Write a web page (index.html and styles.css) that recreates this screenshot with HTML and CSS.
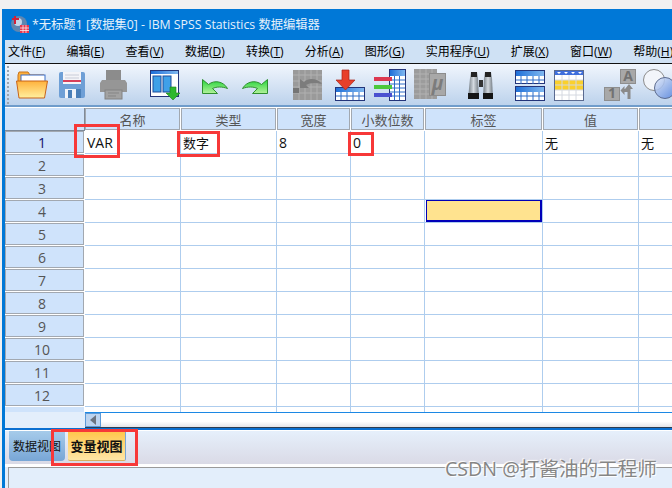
FILE: index.html
```html
<!DOCTYPE html>
<html lang="zh-CN">
<head>
  <meta charset="UTF-8" />
  <title>*无标题1 [数据集0] - IBM SPSS Statistics 数据编辑器</title>
  <link rel="stylesheet" href="styles.css">
</head>
<body>
  <svg class="defs" width="0" height="0">
    <defs>
      <linearGradient id="hdr" x1="0" y1="0" x2="1" y2="0"><stop offset="0" stop-color="#1f6fd8"/><stop offset="1" stop-color="#7fb8f0"/></linearGradient>
      <linearGradient id="grn" x1="0" y1="0" x2="0" y2="1"><stop offset="0" stop-color="#22d43a"/><stop offset="1" stop-color="#b4f29a"/></linearGradient>
      <linearGradient id="fold" x1="0" y1="0" x2="0" y2="1"><stop offset="0" stop-color="#ffb23c"/><stop offset="1" stop-color="#fff0a0"/></linearGradient>
      <linearGradient id="silver" x1="0" y1="0" x2="1" y2="0"><stop offset="0" stop-color="#6f7880"/><stop offset=".5" stop-color="#d4dae0"/><stop offset="1" stop-color="#6f7880"/></linearGradient>
      <linearGradient id="ball" x1="0" y1="0" x2="1" y2="1"><stop offset="0" stop-color="#dfe8f8"/><stop offset="1" stop-color="#4f7fdc"/></linearGradient>
    </defs>
  </svg>

  <div class="window">
    <div class="titlebar">
      <svg class="app-icon" width="18" height="18" viewBox="0 0 18 18">
        <circle cx="8" cy="9" r="8" fill="#5f86b0"/>
        <circle cx="7" cy="7" r="4" fill="#c4d6e8"/>
        <path d="M4 1v8M1 4h7" stroke="#d0203a" stroke-width="2"/>
        <rect x="9" y="10" width="9" height="8" fill="#e8384f"/>
        <path d="M9 13h9M9 15.500h9M12 10v8M15 10v8" stroke="#fff" stroke-width=".7"/>
      </svg>
      <span>*无标题1 [数据集0] - IBM SPSS Statistics 数据编辑器</span>
    </div>

    <div class="menubar">
      <span>文件(<u>F</u>)</span>
      <span>编辑(<u>E</u>)</span>
      <span>查看(<u>V</u>)</span>
      <span>数据(<u>D</u>)</span>
      <span>转换(<u>T</u>)</span>
      <span>分析(<u>A</u>)</span>
      <span>图形(<u>G</u>)</span>
      <span>实用程序(<u>U</u>)</span>
      <span>扩展(<u>X</u>)</span>
      <span>窗口(<u>W</u>)</span>
      <span>帮助(<u>H</u>)</span>
    </div>

    <div class="toolbar">
      <div class="handle"></div>

      <!-- open -->
      <svg class="tool" viewBox="0 0 32 32">
        <path d="M2 6l1-3h9l2 3h14v8H2z" fill="#ffb03a" stroke="#c8741a"/>
        <rect x="5" y="6" width="24" height="8" fill="#fff" stroke="#3a6fc8"/>
        <path d="M.500 12h31l-3 17H3z" fill="url(#fold)" stroke="#c8641a"/>
      </svg>
      <!-- save -->
      <svg class="tool" viewBox="0 0 32 32">
        <rect x="3" y="3" width="26" height="26" rx="2" fill="#6e9fd6"/>
        <rect x="7" y="3" width="18" height="12" fill="#f4f4f8"/>
        <path d="M7 12h18" stroke="#d8405a" stroke-width="2"/>
        <path d="M9 6h14M9 9h14" stroke="#c8ccd8"/>
        <rect x="9" y="20" width="15" height="9" fill="#f0f4fa"/>
        <rect x="12" y="21" width="4" height="8" fill="#4a7fb8"/>
        <path d="M20 20h5v9h-5z" fill="#4a7fb8"/>
      </svg>
      <!-- print -->
      <svg class="tool" viewBox="0 0 32 32">
        <path d="M10 1h15v10H10z" fill="#8c8c8c"/>
        <path d="M6 11h23l2 3v9H4v-9z" fill="#969696"/>
        <rect x="9" y="21" width="17" height="9" fill="#a2a2a2" stroke="#828282"/>
        <path d="M12 24h11M12 27h8" stroke="#858585"/>
      </svg>
      <!-- variable view -->
      <svg class="tool g12" viewBox="0 0 32 32">
        <rect x="2.500" y="1.500" width="28" height="26" fill="#fff" stroke="#24357a"/>
        <rect x="3" y="2" width="27" height="3" fill="url(#hdr)"/>
        <rect x="5" y="7" width="8" height="16" fill="#3fa0e8" stroke="#1c4c9c"/>
        <rect x="15" y="7" width="8" height="16" fill="#3fa0e8" stroke="#1c4c9c"/>
        <path d="M22 18h6v6h4l-7 7-7-7h4z" fill="#2eb82e" stroke="#1c7c1c" stroke-width=".6"/>
      </svg>
      <!-- undo -->
      <svg class="tool g12" viewBox="0 0 32 32">
        <path d="M2.500 10.500v14h15l-5-5c4-2 10-2 15 0-4-7-13-9-19-4z" fill="url(#grn)" stroke="#2f8f2f"/>
      </svg>
      <!-- redo -->
      <svg class="tool" viewBox="0 0 32 32">
        <path transform="matrix(-1 0 0 1 30 0)" d="M2.500 10.500v14h15l-5-5c4-2 10-2 15 0-4-7-13-9-19-4z" fill="url(#grn)" stroke="#2f8f2f"/>
      </svg>
      <!-- go to case -->
      <svg class="tool g12" viewBox="0 0 32 32">
        <rect x="1" y="1" width="29" height="30" fill="#9a9a9a"/>
        <path d="M1 6h29M1 12h29M1 18h29M1 24h29M7 1v30M13 1v30M19 1v30M25 1v30" stroke="#b0b0b0"/>
        <rect x="1" y="19" width="6" height="5" fill="#757575"/>
        <path d="M8 10v9h9l-3-3c3-2 9-3 16-1-4-5-13-7-18-2z" fill="#7c7c7c"/>
      </svg>
      <!-- go to variable -->
      <svg class="tool g2" viewBox="0 0 32 32">
        <rect x="1.500" y="18.500" width="29" height="13" fill="#fff" stroke="#24357a"/>
        <rect x="2" y="19" width="28" height="4" fill="url(#hdr)"/>
        <path d="M2 27h28M7 23v8M13 23v8M19 23v8M25 23v8" stroke="#2c6cc8"/>
        <path d="M8 1h7v10h6L11.500 21 2 11h6z" fill="#e8402a" stroke="#a82418" stroke-width=".7"/>
      </svg>
      <!-- variables -->
      <svg class="tool" viewBox="0 0 32 32">
        <rect x="15.500" y=".500" width="16" height="31" fill="#fff" stroke="#24357a"/>
        <rect x="16" y="1" width="15" height="6" fill="url(#hdr)"/>
        <path d="M16 11h15M16 15h15M16 19h15M16 23h15M16 27h15M20.500 7v24M25.500 7v24" stroke="#2c6cc8"/>
        <rect x="0" y="8" width="18" height="4" fill="#dc3850"/>
        <rect x="0" y="16" width="18" height="4" fill="#4cc83c"/>
        <rect x="0" y="24" width="18" height="4" fill="#4a50d0"/>
      </svg>
      <!-- value labels -->
      <svg class="tool" viewBox="0 0 32 32">
        <rect x="0" y="0" width="23" height="30" fill="#9c9c9c"/>
        <path d="M0 5h23M0 10h23M0 15h23M0 20h23M0 25h23M6 0v30M12 0v30M18 0v30" stroke="#b2b2b2"/>
        <rect x="15.500" y="4.500" width="16" height="22" fill="#a8a8a8" stroke="#8c8c8c"/>
        <text class="mu" x="23.500" y="21" text-anchor="middle">μ</text>
      </svg>
      <!-- find -->
      <svg class="tool g12" viewBox="0 0 32 32">
        <path d="M4 9l1-6h6l1 6 1 21H2z" fill="url(#silver)"/>
        <path d="M18 9l1-6h6l1 6 1 21H17z" fill="url(#silver)"/>
        <rect x="5" y="3" width="6" height="5" fill="#222"/>
        <rect x="19" y="3" width="6" height="5" fill="#222"/>
        <rect x="2" y="24" width="11" height="6" fill="#151515"/>
        <rect x="17" y="24" width="10" height="6" fill="#151515"/>
        <rect x="13" y="11" width="4" height="7" fill="#333"/>
      </svg>
      <!-- split file -->
      <svg class="tool g8" viewBox="0 0 32 32">
        <rect x="1.500" y="1.500" width="29" height="13" fill="#fff" stroke="#24357a"/>
        <rect x="2" y="2" width="28" height="5" fill="url(#hdr)"/>
        <path d="M2 11h28M7 7v8M13 7v8M19 7v8M25 7v8" stroke="#2c6cc8"/>
        <rect x="1.500" y="17.500" width="29" height="14" fill="#fff" stroke="#24357a"/>
        <rect x="2" y="18" width="28" height="5" fill="url(#hdr)"/>
        <path d="M2 27h28M7 23v8M13 23v8M19 23v8M25 23v8" stroke="#2c6cc8"/>
      </svg>
      <!-- select cases -->
      <svg class="tool" viewBox="0 0 32 32">
        <rect x=".500" y="1.500" width="29" height="30" fill="#fff" stroke="#5a6a90"/>
        <rect x="1" y="2" width="28" height="4" fill="#3f6fdc"/>
        <rect x="1" y="11" width="28" height="10" fill="#fad02c"/>
        <path d="M1 11h28M1 16h28M1 21h28M1 26h28M8 6v25M15 6v25M22 6v25" stroke="#d4d8e0"/>
        <path d="M3 3h4l-2 2zM10 3h4l-2 2zM17 3h4l-2 2zM24 3h4l-2 2z" fill="#fff"/>
      </svg>
      <!-- value labels 1/A -->
      <svg class="tool g10" viewBox="0 0 32 32">
        <rect x="16.500" y=".500" width="15" height="14" fill="#a8a8a8" stroke="#8e8e8e"/>
        <rect x=".500" y="18.500" width="15" height="13" fill="#a8a8a8" stroke="#8e8e8e"/>
        <text class="swap" x="24" y="12" text-anchor="middle">A</text>
        <text class="swap" x="8" y="29" text-anchor="middle">1</text>
        <path d="M25 15l4 5h-2.500v10h-3v-7h-3v3l-4-4.500 4-4.500v3h3V20H21z" fill="#8a8a8a"/>
      </svg>
      <!-- use sets -->
      <svg class="tool" viewBox="0 0 32 32">
        <circle cx="10" cy="11" r="10.500" fill="#f2f5fa" stroke="#8c8c8c"/>
        <circle cx="21" cy="19" r="10.500" fill="url(#ball)" stroke="#5c6c90" fill-opacity=".85"/>
      </svg>
    </div>

    <div class="sheet">
      <table class="grid">
        <colgroup>
          <col class="c-row"><col class="c-96"><col class="c-96"><col class="c-74"><col class="c-74"><col class="c-118"><col class="c-96"><col class="c-96">
        </colgroup>
        <tr><th class="corner"></th><th>名称</th><th>类型</th><th>宽度</th><th>小数位数</th><th>标签</th><th>值</th><th></th></tr>
        <tr><th class="num cur">1</th><td class="lat">VAR</td><td>数字</td><td class="lat">8</td><td class="lat">0</td><td></td><td>无</td><td>无</td></tr>
        <tr><th class="num">2</th><td></td><td></td><td></td><td></td><td></td><td></td><td></td></tr>
        <tr><th class="num">3</th><td></td><td></td><td></td><td></td><td></td><td></td><td></td></tr>
        <tr><th class="num">4</th><td></td><td></td><td></td><td></td><td class="active"><div class="sel"></div></td><td></td><td></td></tr>
        <tr><th class="num">5</th><td></td><td></td><td></td><td></td><td></td><td></td><td></td></tr>
        <tr><th class="num">6</th><td></td><td></td><td></td><td></td><td></td><td></td><td></td></tr>
        <tr><th class="num">7</th><td></td><td></td><td></td><td></td><td></td><td></td><td></td></tr>
        <tr><th class="num">8</th><td></td><td></td><td></td><td></td><td></td><td></td><td></td></tr>
        <tr><th class="num">9</th><td></td><td></td><td></td><td></td><td></td><td></td><td></td></tr>
        <tr><th class="num">10</th><td></td><td></td><td></td><td></td><td></td><td></td><td></td></tr>
        <tr><th class="num">11</th><td></td><td></td><td></td><td></td><td></td><td></td><td></td></tr>
        <tr><th class="num">12</th><td></td><td></td><td></td><td></td><td></td><td></td><td></td></tr>
        <tr><th class="blank"></th><td></td><td></td><td></td><td></td><td></td><td></td><td></td></tr>
      </table>
    </div>

    <div class="scrollrow">
      <div class="scroll-spacer"></div>
      <div class="scrollbar">
        <div class="scroll-btn"><div class="arrow-left"></div></div>
        <div class="scroll-track"></div>
      </div>
    </div>

    <div class="tabstrip">
      <div class="tab">数据视图</div>
      <div class="tab on">变量视图</div>
    </div>

    <div class="status"></div>
  </div>

  <!-- red marks drawn over the screenshot -->
  <div class="mark m-name"></div>
  <div class="mark m-type"></div>
  <div class="mark m-dec"></div>
  <div class="mark m-tab"></div>

  <div class="watermark">CSDN @打酱油的工程师</div>
</body>
</html>
```

FILE: styles.css
```css
* { box-sizing: border-box; }

html, body {
  margin: 0;
  padding: 0;
  height: 488px;
  overflow: hidden;
  background: #f1f1f1;
  font-family: "Open Sans", "Noto Sans CJK SC", sans-serif;
  font-size: 12px;
  color: #000;
}

.defs { position: absolute; }

.window {
  margin: 9px 0 0 2px;
  height: 479px;
  display: flex;
  flex-direction: column;
  background: #e3eefb;
  border-left: 3px solid #0078d7;
  overflow: hidden;
}

.titlebar {
  flex: none;
  height: 31px;
  display: flex;
  align-items: center;
  gap: 3px;
  padding: 0 0 2px 6px;
  background: #0078d7;
  color: #e6f1fb;
  font-size: 12.300px;
  white-space: nowrap;
}

.menubar {
  flex: none;
  height: 24px;
  display: flex;
  gap: 21.200px;
  align-items: center;
  padding: 0 0 1px 3px;
  background: #cfe1f4;
  border-bottom: 1px solid #111;
  white-space: nowrap;
}
.menubar u { text-decoration-thickness: 1px; }

.toolbar {
  flex: none;
  height: 43px;
  display: flex;
  gap: 8px;
  padding: 5px 0 0 11px;
  background: linear-gradient(#f1f6fd, #bcd2ec);
  border-bottom: 2px solid #6f9ccb;
  position: relative;
}

.handle {
  position: absolute;
  left: 2px;
  top: 2px;
  width: 2px;
  height: 38px;
  background: repeating-linear-gradient(#9aa4b0 0 2px, transparent 2px 4px);
}

.tool {
  flex: none;
  width: 32px;
  height: 32px;
  overflow: visible;
}
.g2 { margin-left: 2px; }
.g8 { margin-left: 8px; }
.g10 { margin-left: 10px; }
.g12 { margin-left: 12px; }

.mu { font-size: 19px; font-style: italic; font-weight: 700; fill: #7c7c7c; }
.swap { font-size: 14px; font-weight: 700; fill: #727272; }

.sheet {
  flex: none;
  height: 305px;
  padding-top: 1px;
  overflow: hidden;
  background: #fff;
}

.grid {
  table-layout: fixed;
  width: 730px;
  border-collapse: separate;
  border-spacing: 0;
}
.c-row { width: 80px; }
.c-96 { width: 96px; }
.c-74 { width: 74px; }
.c-118 { width: 118px; }

.grid tr { height: 23px; }

.grid th {
  padding: 0;
  font-size: 13px;
  font-weight: 400;
  color: #555;
  background: #cfe3fb;
  border-right: 1px solid #fff;
  border-bottom: 1px solid #fff;
  box-shadow: inset 0 0 0 1px #a2a8b0;
}
.grid th.num { padding: 1px 5px 0 0; font-size: 14px; }
.grid th.cur { color: #12126e; }
.grid th.corner { box-shadow: none; border-right: 1px solid #7f8a98; border-bottom: 1px solid #7f8a98; }
.grid th.blank { box-shadow: none; }

.grid td {
  padding: 0 0 0 2px;
  font-size: 13px;
  color: #111;
  border-right: 1px solid #aecdee;
  border-bottom: 1px solid #aecdee;
  background: #fff;
}
.grid td.lat { font-size: 14px; }

.grid td.active { padding: 0 0 0 1px; }

.sel {
  height: 22px;
  background: #ffe38f;
  border: 2px solid #0000b8;
  border-width: 1px 2px 2px 1px;
}

.scrollrow {
  flex: none;
  height: 16px;
  display: flex;
}

.scroll-spacer {
  flex: none;
  width: 80px;
  background: #e3eefb;
}

.scrollbar {
  flex: 1;
  display: flex;
  border-top: 1px solid #1c88e4;
  border-bottom: 1px solid #2c3c50;
}

.scroll-btn {
  flex: none;
  width: 16px;
  display: flex;
  align-items: center;
  justify-content: center;
  background: #bcd4f0;
  border: 1px solid #5c9ad8;
}

.arrow-left {
  width: 0;
  height: 0;
  border-style: solid;
  border-width: 5px 6px 5px 0;
  border-color: transparent #6b7480 transparent transparent;
}

.scroll-track {
  flex: 1;
  background: linear-gradient(#fff 60%, #e4e4e8);
}

.tabstrip {
  flex: none;
  height: 39px;
  display: flex;
  gap: 3px;
  padding: 0 0 0 4px;
  border-top: 2px solid #0b6fd0;
  border-bottom: 3px solid #fff;
  background: linear-gradient(#e6f0fc, #dadae6);
  box-shadow: inset 0 1px 0 #fff;
}

.tab {
  width: 56px;
  height: 30px;
  margin-top: 1px;
  display: flex;
  align-items: center;
  justify-content: center;
  white-space: nowrap;
  font-size: 12px;
  color: #111;
  background: linear-gradient(#a6cbea, #78a6d6);
  border-radius: 0 0 4px 4px;
}

.tab.on {
  width: 58px;
  font-size: 13px;
  font-weight: 700;
  background: linear-gradient(#ffc64a, #ffe6a6);
  border-right: 1px solid #7aa6d6;
  border-bottom: 1px solid #d8b060;
  border-radius: 0 0 2px 2px;
}

.status {
  flex: 1;
  margin-left: 3px;
  background: #e3eefb;
  border-top: 1px solid #9a9a9a;
  border-left: 1px solid #9a9a9a;
}

.mark {
  position: absolute;
  border: 3px solid #f73838;
}
.m-name { left: 74px; top: 124px; width: 46px; height: 34px; }
.m-type { left: 177px; top: 131px; width: 43px; height: 26px; }
.m-dec { left: 348px; top: 132px; width: 26px; height: 24px; }
.m-tab { left: 51px; top: 429px; width: 87px; height: 37px; }

.watermark {
  position: absolute;
  left: 445px;
  top: 456px;
  font-size: 19.600px;
  line-height: 26px;
  white-space: nowrap;
  color: #858585;
  text-shadow: 1px 1px 1px #fff, -1px -1px 1px #fff;
}
```
